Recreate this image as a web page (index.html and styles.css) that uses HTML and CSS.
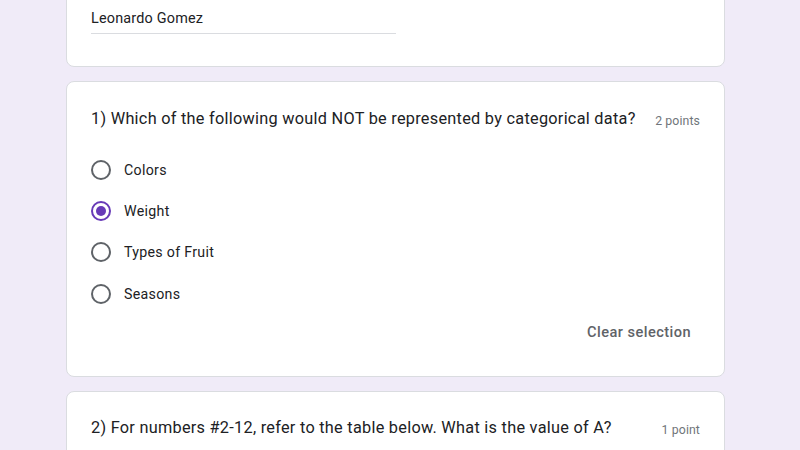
FILE: index.html
```html
<!DOCTYPE html>
<html lang="en">
<head>
<meta charset="utf-8">
<title>Form</title>
<link rel="stylesheet" href="styles.css">
</head>
<body>
<main class="form">
  <section class="card card-name">
    <div class="answer-field">Leonardo Gomez</div>
  </section>

  <section class="card card-question">
    <header class="q-head">
      <h2 class="q-title">1) Which of the following would NOT be represented by categorical data?</h2>
      <span class="q-points">2 points</span>
    </header>
    <ul class="options">
      <li class="option"><span class="radio"></span><span class="opt-label">Colors</span></li>
      <li class="option"><span class="radio radio-checked"></span><span class="opt-label">Weight</span></li>
      <li class="option"><span class="radio"></span><span class="opt-label">Types of Fruit</span></li>
      <li class="option"><span class="radio"></span><span class="opt-label">Seasons</span></li>
    </ul>
    <div class="clear-row"><span class="clear-btn">Clear selection</span></div>
  </section>

  <section class="card card-next">
    <header class="q-head">
      <h2 class="q-title">2) For numbers #2-12, refer to the table below. What is the value of A?</h2>
      <span class="q-points">1 point</span>
    </header>
  </section>
</main>
</body>
</html>
```

FILE: styles.css
```css
html, body {
  margin: 0;
  padding: 0;
  height: 100%;
  overflow: hidden;
}
body {
  background: #f0ebf8;
  font-family: Roboto, "Liberation Sans", Arial, sans-serif;
  color: #202124;
}
.form {
  width: 659px;
  margin-left: 66px;
  display: flex;
  flex-direction: column;
  gap: 14px;
}
.card {
  background: #fff;
  border: 1px solid #dadce0;
  border-radius: 8px;
  padding: 24px;
  box-sizing: border-box;
}
.card-name {
  margin-top: -16px;
  padding-bottom: 33px;
  height: 83px;
}
.answer-field {
  width: 305px;
  font-size: 14.4px;
  line-height: 20px;
  padding-bottom: 4px;
  border-bottom: 1px solid #dadce0;
  color: #202124;
  letter-spacing: 0.2px;
}
.q-head {
  display: flex;
  justify-content: space-between;
  align-items: center;
}
.q-title {
  margin: 0;
  font-size: 16.3px;
  line-height: 24px;
  font-weight: 400;
  color: #202124;
  letter-spacing: 0.27px;
  white-space: nowrap;
}
.q-points {
  font-size: 12.3px;
  line-height: 16px;
  color: #70757a;
  white-space: nowrap;
  margin-left: 8px;
  margin-top: 3px;
  letter-spacing: 0.1px;
}
.card-question {
  height: 296px;
  padding-top: 25px;
}
.options {
  list-style: none;
  margin: 18px 0 0;
  padding: 0;
}
.option {
  height: 41.4px;
  display: flex;
  align-items: center;
  gap: 13px;
}
.radio {
  width: 20px;
  height: 20px;
  box-sizing: border-box;
  border: 2px solid #5f6368;
  border-radius: 50%;
  display: flex;
  align-items: center;
  justify-content: center;
  flex: none;
}
.radio-checked {
  border-color: #673ab7;
}
.radio-checked::after {
  content: "";
  width: 10px;
  height: 10px;
  border-radius: 50%;
  background: #673ab7;
}
.opt-label {
  font-size: 14.2px;
  line-height: 20px;
  color: #202124;
  letter-spacing: 0.3px;
}
.clear-row {
  display: flex;
  justify-content: flex-end;
  margin-top: 7px;
  padding-right: 9px;
}
.clear-btn {
  font-size: 14.6px;
  line-height: 20px;
  font-weight: 500;
  color: #5f6368;
  letter-spacing: 0.45px;
}
.card-next {
  height: 120px;
}
```
